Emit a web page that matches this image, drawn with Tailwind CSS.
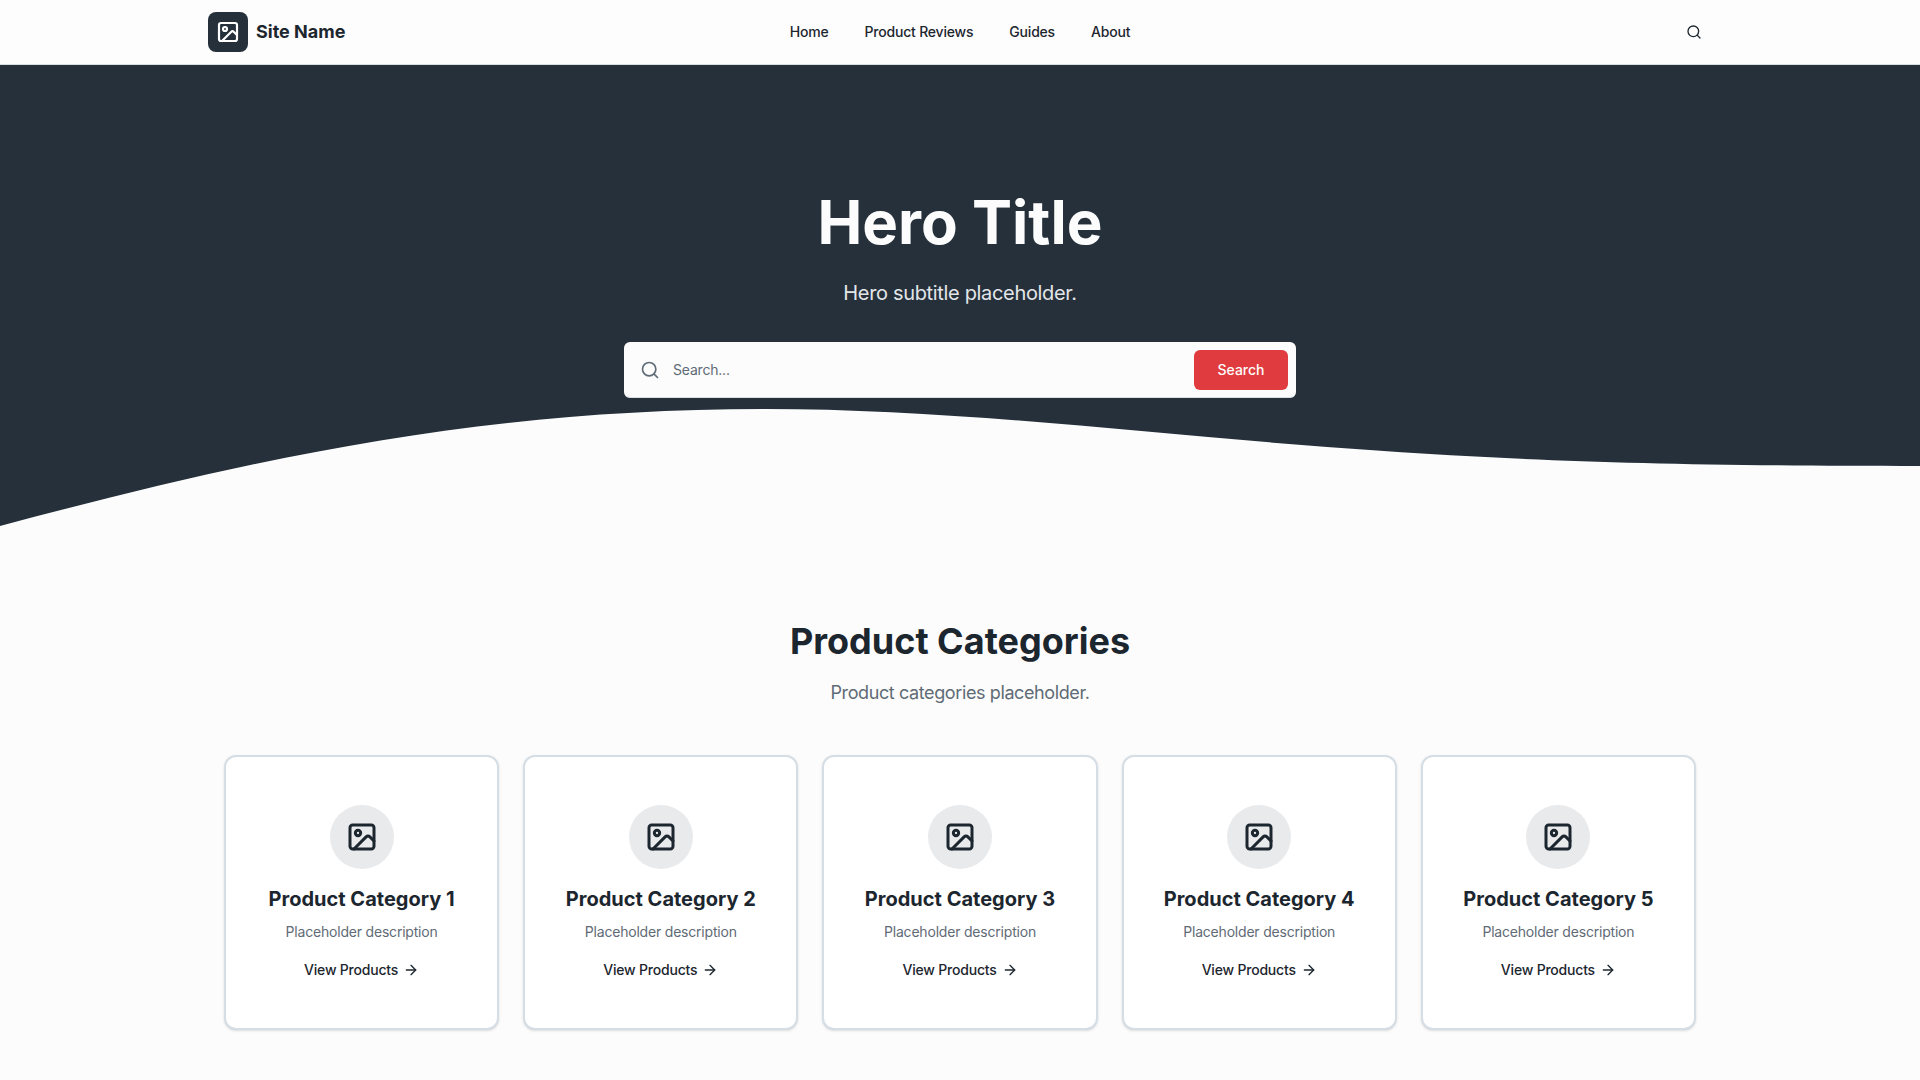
<!DOCTYPE html>
<html lang="en">

<head>
    <meta charset="UTF-8">
    <meta name="viewport" content="width=device-width, initial-scale=1.0">
    <title>Site Name</title>
    <script src="https://cdn.jsdelivr.net/npm/@tailwindcss/browser@4"></script>
</head>

<body class="bg-[#fcfcfc] text-[#1c262e] font-[Inter,sans-serif] h-[1080px] overflow-hidden">
    <header class="bg-[#fdfdfd] border-b border-[#d9dee3] h-[65px]">
        <div class="max-w-[1536px] mx-auto px-4 h-full grid grid-cols-3 items-center">
            <a href="#" class="flex items-center gap-2">
                <span class="w-10 h-10 bg-[#25303b] rounded-lg flex items-center justify-center text-white">
                    <svg xmlns="http://www.w3.org/2000/svg" width="24" height="24" viewBox="0 0 24 24" fill="none"
                        stroke="currentColor" stroke-width="2.2" stroke-linecap="round" stroke-linejoin="round">
                        <rect x="3" y="3" width="18" height="18" rx="2" />
                        <circle cx="9" cy="9" r="2" />
                        <path d="m21 15-3.086-3.086a2 2 0 0 0-2.828 0L6 21" />
                    </svg>
                </span>
                <span class="text-lg font-bold">Site Name</span>
            </a>
            <nav class="justify-self-center flex items-center gap-9 text-sm font-medium tracking-[-0.2px]">
                <a href="#">Home</a>
                <a href="#">Product Reviews</a>
                <a href="#">Guides</a>
                <a href="#">About</a>
            </nav>
            <button class="justify-self-end p-[10px]">
                <svg xmlns="http://www.w3.org/2000/svg" width="16" height="16" viewBox="0 0 24 24" fill="none"
                    stroke="currentColor" stroke-width="2" stroke-linecap="round" stroke-linejoin="round">
                    <circle cx="11" cy="11" r="8" />
                    <path d="m21 21-4.3-4.3" />
                </svg>
            </button>
        </div>
    </header>

    <section class="relative bg-[#25303b] h-[463px] pt-[127px]">
        <div class="relative z-10 flex flex-col items-center">
            <h1 class="text-6xl font-bold text-[#fcfcfc] leading-none">Hero Title</h1>
            <p class="mt-[27px] text-xl text-[#e3e6e9] leading-7 tracking-[-0.33px]">Hero subtitle placeholder.</p>
            <div class="mt-[35px] w-[672px] h-14 bg-[#fcfcfc] border-b border-[#d9dee3] rounded-md flex items-center pl-4 pr-2">
                <svg class="text-[#5f6b76] mr-[13px]" xmlns="http://www.w3.org/2000/svg" width="20" height="20"
                    viewBox="0 0 24 24" fill="none" stroke="currentColor" stroke-width="2" stroke-linecap="round"
                    stroke-linejoin="round">
                    <circle cx="11" cy="11" r="8" />
                    <path d="m21 21-4.3-4.3" />
                </svg>
                <input type="text" placeholder="Search..."
                    class="flex-1 text-sm tracking-[-0.2px] outline-none placeholder:text-[#5f6b76]">
                <button
                    class="w-[94px] h-10 bg-[#e03c3f] text-[#fcfcfc] text-sm font-medium rounded-md">Search</button>
            </div>
        </div>
        <svg class="absolute bottom-0 left-0 w-full h-[120px]" viewBox="0 0 1920 120" preserveAspectRatio="none">
            <path fill="#fcfcfc" d="M0 118C255 50 480 1 765 1C950 1 1140 24.8 1327 39C1500 52 1650 58 1920 58V120H0Z" />
        </svg>
    </section>

    <main class="max-w-[1536px] mx-auto px-8 pt-[93px]">
        <div class="text-center">
            <h2 class="text-4xl font-bold leading-10">Product Categories</h2>
            <p class="mt-[18px] text-lg tracking-[-0.39px] text-[#5f6b76]">Product categories placeholder.</p>
        </div>
        <div class="mt-[48px] grid grid-cols-5 gap-6">
            <div class="bg-white border-2 border-[#d5dde5] rounded-xl shadow-sm h-[275px] flex flex-col items-center pt-12">
                <span class="w-16 h-16 rounded-full bg-[#e9eaec] flex items-center justify-center">
                    <svg xmlns="http://www.w3.org/2000/svg" width="32" height="32" viewBox="0 0 24 24" fill="none"
                        stroke="currentColor" stroke-width="2.25" stroke-linecap="round" stroke-linejoin="round">
                        <rect x="3" y="3" width="18" height="18" rx="2" />
                        <circle cx="9" cy="9" r="2" />
                        <path d="m21 15-3.086-3.086a2 2 0 0 0-2.828 0L6 21" />
                    </svg>
                </span>
                <h3 class="mt-4 text-xl font-bold">Product Category 1</h3>
                <p class="mt-[9px] text-sm tracking-[-0.2px] text-[#5f6b76]">Placeholder description</p>
                <a href="#" class="mt-[18px] flex items-center gap-[5px] text-sm font-medium tracking-[-0.2px]">View Products
                    <svg xmlns="http://www.w3.org/2000/svg" width="16" height="16" viewBox="0 0 24 24" fill="none"
                        stroke="currentColor" stroke-width="2" stroke-linecap="round" stroke-linejoin="round">
                        <path d="M5 12h14" />
                        <path d="m12 5 7 7-7 7" />
                    </svg>
                </a>
            </div>
            <div class="bg-white border-2 border-[#d5dde5] rounded-xl shadow-sm h-[275px] flex flex-col items-center pt-12">
                <span class="w-16 h-16 rounded-full bg-[#e9eaec] flex items-center justify-center">
                    <svg xmlns="http://www.w3.org/2000/svg" width="32" height="32" viewBox="0 0 24 24" fill="none"
                        stroke="currentColor" stroke-width="2.25" stroke-linecap="round" stroke-linejoin="round">
                        <rect x="3" y="3" width="18" height="18" rx="2" />
                        <circle cx="9" cy="9" r="2" />
                        <path d="m21 15-3.086-3.086a2 2 0 0 0-2.828 0L6 21" />
                    </svg>
                </span>
                <h3 class="mt-4 text-xl font-bold">Product Category 2</h3>
                <p class="mt-[9px] text-sm tracking-[-0.2px] text-[#5f6b76]">Placeholder description</p>
                <a href="#" class="mt-[18px] flex items-center gap-[5px] text-sm font-medium tracking-[-0.2px]">View Products
                    <svg xmlns="http://www.w3.org/2000/svg" width="16" height="16" viewBox="0 0 24 24" fill="none"
                        stroke="currentColor" stroke-width="2" stroke-linecap="round" stroke-linejoin="round">
                        <path d="M5 12h14" />
                        <path d="m12 5 7 7-7 7" />
                    </svg>
                </a>
            </div>
            <div class="bg-white border-2 border-[#d5dde5] rounded-xl shadow-sm h-[275px] flex flex-col items-center pt-12">
                <span class="w-16 h-16 rounded-full bg-[#e9eaec] flex items-center justify-center">
                    <svg xmlns="http://www.w3.org/2000/svg" width="32" height="32" viewBox="0 0 24 24" fill="none"
                        stroke="currentColor" stroke-width="2.25" stroke-linecap="round" stroke-linejoin="round">
                        <rect x="3" y="3" width="18" height="18" rx="2" />
                        <circle cx="9" cy="9" r="2" />
                        <path d="m21 15-3.086-3.086a2 2 0 0 0-2.828 0L6 21" />
                    </svg>
                </span>
                <h3 class="mt-4 text-xl font-bold">Product Category 3</h3>
                <p class="mt-[9px] text-sm tracking-[-0.2px] text-[#5f6b76]">Placeholder description</p>
                <a href="#" class="mt-[18px] flex items-center gap-[5px] text-sm font-medium tracking-[-0.2px]">View Products
                    <svg xmlns="http://www.w3.org/2000/svg" width="16" height="16" viewBox="0 0 24 24" fill="none"
                        stroke="currentColor" stroke-width="2" stroke-linecap="round" stroke-linejoin="round">
                        <path d="M5 12h14" />
                        <path d="m12 5 7 7-7 7" />
                    </svg>
                </a>
            </div>
            <div class="bg-white border-2 border-[#d5dde5] rounded-xl shadow-sm h-[275px] flex flex-col items-center pt-12">
                <span class="w-16 h-16 rounded-full bg-[#e9eaec] flex items-center justify-center">
                    <svg xmlns="http://www.w3.org/2000/svg" width="32" height="32" viewBox="0 0 24 24" fill="none"
                        stroke="currentColor" stroke-width="2.25" stroke-linecap="round" stroke-linejoin="round">
                        <rect x="3" y="3" width="18" height="18" rx="2" />
                        <circle cx="9" cy="9" r="2" />
                        <path d="m21 15-3.086-3.086a2 2 0 0 0-2.828 0L6 21" />
                    </svg>
                </span>
                <h3 class="mt-4 text-xl font-bold">Product Category 4</h3>
                <p class="mt-[9px] text-sm tracking-[-0.2px] text-[#5f6b76]">Placeholder description</p>
                <a href="#" class="mt-[18px] flex items-center gap-[5px] text-sm font-medium tracking-[-0.2px]">View Products
                    <svg xmlns="http://www.w3.org/2000/svg" width="16" height="16" viewBox="0 0 24 24" fill="none"
                        stroke="currentColor" stroke-width="2" stroke-linecap="round" stroke-linejoin="round">
                        <path d="M5 12h14" />
                        <path d="m12 5 7 7-7 7" />
                    </svg>
                </a>
            </div>
            <div class="bg-white border-2 border-[#d5dde5] rounded-xl shadow-sm h-[275px] flex flex-col items-center pt-12">
                <span class="w-16 h-16 rounded-full bg-[#e9eaec] flex items-center justify-center">
                    <svg xmlns="http://www.w3.org/2000/svg" width="32" height="32" viewBox="0 0 24 24" fill="none"
                        stroke="currentColor" stroke-width="2.25" stroke-linecap="round" stroke-linejoin="round">
                        <rect x="3" y="3" width="18" height="18" rx="2" />
                        <circle cx="9" cy="9" r="2" />
                        <path d="m21 15-3.086-3.086a2 2 0 0 0-2.828 0L6 21" />
                    </svg>
                </span>
                <h3 class="mt-4 text-xl font-bold">Product Category 5</h3>
                <p class="mt-[9px] text-sm tracking-[-0.2px] text-[#5f6b76]">Placeholder description</p>
                <a href="#" class="mt-[18px] flex items-center gap-[5px] text-sm font-medium tracking-[-0.2px]">View Products
                    <svg xmlns="http://www.w3.org/2000/svg" width="16" height="16" viewBox="0 0 24 24" fill="none"
                        stroke="currentColor" stroke-width="2" stroke-linecap="round" stroke-linejoin="round">
                        <path d="M5 12h14" />
                        <path d="m12 5 7 7-7 7" />
                    </svg>
                </a>
            </div>
        </div>
    </main>
</body>

</html>
